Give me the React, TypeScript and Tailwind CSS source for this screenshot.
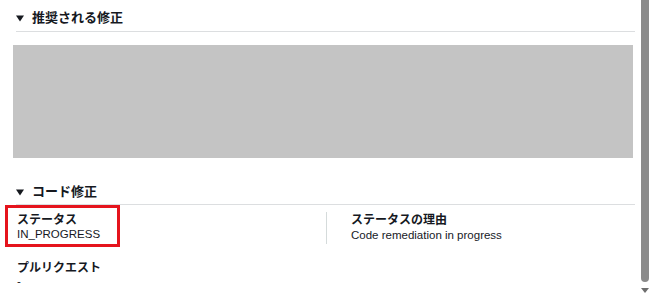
import React from "react";

const font = { fontFamily: '"Liberation Sans", "Noto Sans CJK JP", sans-serif' };
const jp = { fontFamily: 'Roboto, "Noto Sans CJK JP", sans-serif' };

function Tri() {
  return (
    <svg width="8" height="7" viewBox="0 0 8 7" className="shrink-0">
      <polygon points="0,0.5 8,0.5 4,6.5" fill="#16191f" />
    </svg>
  );
}

function Heading({ text, pb = 3 }: { text: string; pb?: number }) {
  return (
    <div
      className={`ml-[3px] flex h-[20px] items-center gap-[8px] border-b border-[#dcdee0] box-content ${pb === 3 ? "pb-[3px]" : "pb-[2px]"}`}
    >
      <Tri />
      <span className="text-[13px] font-bold leading-[20px] text-[#16191f]" style={jp}>{text}</span>
    </div>
  );
}

export default function App() {
  return (
    <div className="flex h-[300px] w-[651px] bg-white overflow-hidden" style={font}>
      <div className="relative flex-1 pl-[13px] pr-[2px] pt-[8px]">
        <Heading text="推奨される修正" />
        <div className="mt-[13px] mr-[2px] h-[113px] bg-[#c4c4c4]" />
        <div className="mt-[24px]">
          <Heading text="コード修正" pb={2} />
        </div>
        <div className="relative ml-[4px] mt-[7px] grid grid-cols-2">
          <div className="flex flex-col">
            <span className="text-[12px] font-bold leading-[16px] text-[#16191f]" style={jp}>ステータス</span>
            <span className="-mt-[2px] text-[11.5px] leading-[16px] text-[#16191f]">IN_PROGRESS</span>
          </div>
          <div className="flex flex-col border-l border-[#d5dbdb] pl-[24px]">
            <span className="text-[12px] font-bold leading-[16px] text-[#16191f]" style={jp}>ステータスの理由</span>
            <span className="-mt-[1px] text-[11.5px] leading-[17px] text-[#16191f]">Code remediation in progress</span>
          </div>
          <div className="pointer-events-none absolute left-[-12px] top-[-7px] h-[42px] w-[115px] border-[3px] border-[#e5141d]" />
        </div>
        <div className="ml-[4px] mt-[16px] flex flex-col">
          <span className="text-[12px] font-bold leading-[16px] text-[#16191f]" style={jp}>プルリクエスト</span>
          <span className="-mt-[3px] text-[11.5px] leading-[16px] text-[#16191f]">-</span>
        </div>
      </div>
      <div className="flex w-[14px] flex-col items-start pl-[4px]">
        <div className="h-[282px] w-[8px] rounded-b-[4px] bg-[#8a8a8a]" />
        <svg width="8" height="6" viewBox="0 0 8 6" className="mt-[6px]">
          <polygon points="0,0 8,0 4,5" fill="#6e6e6e" />
        </svg>
      </div>
    </div>
  );
}
